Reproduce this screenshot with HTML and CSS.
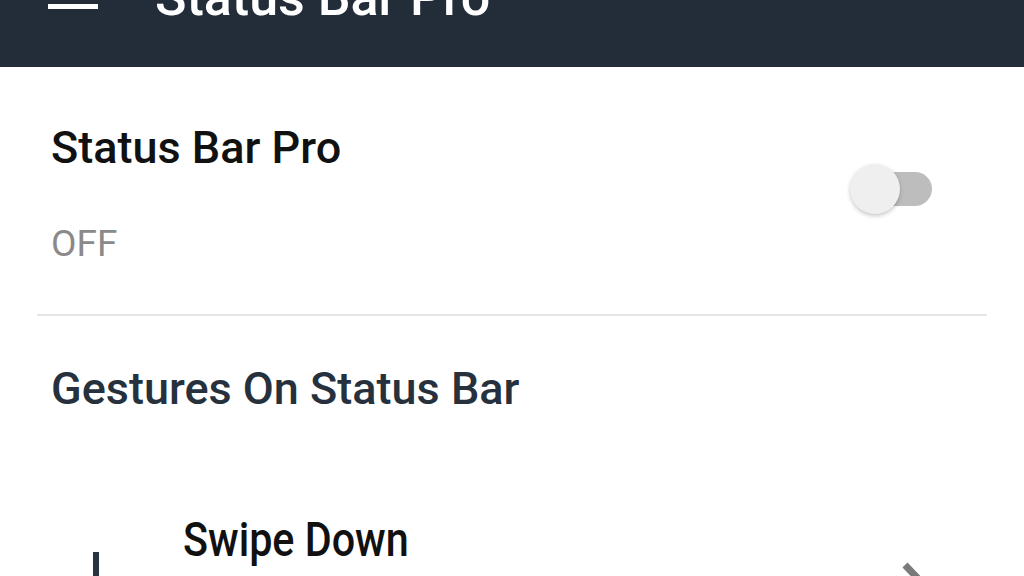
FILE: index.html
```html
<!DOCTYPE html>
<html lang="en">
<head>
    <meta charset="UTF-8">
    <meta name="viewport" content="width=device-width, initial-scale=1.0">
    <title>Status Bar Pro</title>
    <link rel="stylesheet" href="styles.css">
</head>
<body>

    <header class="toolbar">
        <div class="menu-icon">
            <span></span>
            <span></span>
            <span></span>
        </div>
        <h1 class="toolbar-title">Status Bar Pro</h1>
    </header>

    <section class="main-switch">
        <div class="switch-text">
            <h2 class="switch-title">Status Bar Pro</h2>
            <p class="switch-state">OFF</p>
        </div>
        <div class="toggle">
            <div class="toggle-track"></div>
            <div class="toggle-thumb"></div>
        </div>
    </section>

    <hr class="divider">

    <h3 class="section-title">Gestures On Status Bar</h3>

    <div class="gesture-row">
        <svg class="gesture-icon" width="32" height="90" viewBox="0 0 32 90">
            <rect x="13" y="0" width="6" height="70" fill="#263340"/>
            <path d="M2 58 L16 78 L30 58" fill="none" stroke="#263340" stroke-width="6"/>
        </svg>
        <div class="gesture-text">Swipe Down</div>
        <svg class="chevron" width="34" height="60" viewBox="0 0 34 60">
            <path d="M7 7 L29 30 L7 53" fill="none" stroke="#7a7a7a" stroke-width="7"/>
        </svg>
    </div>

</body>
</html>
```

FILE: styles.css
```css
html, body {
    height: 576px;
    overflow: hidden;
}
body {
    margin: 0;
    background-color: #ffffff;
    font-family: 'Roboto', 'Noto Sans', sans-serif;
    color: #111111;
}
.toolbar {
    height: 67px;
    background-color: #222d39; /* dark navy app bar */
    display: flex;
    align-items: flex-start;
    padding-left: 48px;
}
.menu-icon {
    width: 50px;
    margin-top: -30px;
    display: flex;
    flex-direction: column;
    gap: 12px;
}
.menu-icon span {
    display: block;
    height: 5px;
    background-color: #ffffff;
}
.toolbar-title {
    margin: -28px 0 0 57px;
    font-size: 52px;
    line-height: 52px;
    font-weight: 500;
    color: #ffffff;
}
.main-switch {
    display: flex;
    align-items: center;
    justify-content: space-between;
    padding: 55px 92px 48px 51px;
}
.switch-title {
    margin: 0;
    font-size: 45px;
    line-height: 52px;
    font-weight: 500;
    color: #111111;
}
.switch-state {
    margin: 48px 0 0 0;
    font-size: 37px;
    line-height: 44px;
    color: #8a8a8a;
}
.toggle {
    position: relative;
    width: 82px;
    height: 50px;
    margin-bottom: 10px;
}
.toggle-track {
    position: absolute;
    right: 0;
    top: 8px;
    width: 72px;
    height: 34px;
    border-radius: 17px;
    background-color: #bdbdbd;
}
.toggle-thumb {
    position: absolute;
    left: 0;
    top: 0;
    width: 50px;
    height: 50px;
    border-radius: 50%;
    background-color: #efefef;
    box-shadow: 0 2px 4px rgba(0, 0, 0, 0.22);
}
.divider {
    margin: 0 37px;
    border: none;
    height: 2px;
    background-color: #e6e6e6;
}
.section-title {
    margin: 47px 0 0 51px;
    font-size: 45px;
    line-height: 52px;
    font-weight: 500;
    color: #26313d;
}
.gesture-row {
    display: flex;
    align-items: flex-start;
    margin-top: 98px;
    padding-left: 80px;
}
.gesture-icon {
    margin-top: 39px;
}
.gesture-text {
    margin-left: 71px;
    font-weight: 500;
    font-size: 48px;
    line-height: 54px;
    color: #111111;
    transform: scaleX(0.86);
    transform-origin: left center;
}
.chevron {
    margin-left: auto;
    margin-right: 92px;
    margin-top: 45px;
}
```
